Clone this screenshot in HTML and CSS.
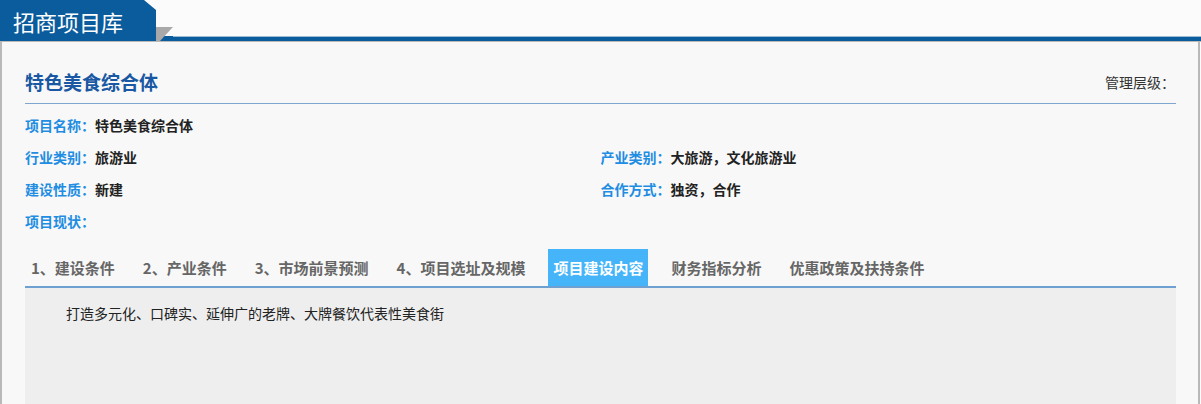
FILE: index.html
```html
<!DOCTYPE html>
<html lang="zh-CN">
<head>
<meta charset="utf-8">
<title>招商项目库</title>
<link rel="stylesheet" href="styles.css">
</head>
<body>
<div class="header">
  <div class="header-tab">招商项目库</div>
  <div class="header-rest">
    <svg class="header-fold" width="17" height="14" viewBox="0 0 17 14">
      <rect x="0" y="9" width="17" height="5" fill="#0b5c9d"/>
      <polygon points="0,0 17,0 4,14 0,14" fill="#a9a9a9"/>
    </svg>
    <div class="header-line"></div>
  </div>
</div>
<div class="panel">
  <div class="title-row">
    <h1 class="title">特色美食综合体</h1>
    <div class="level">管理层级：</div>
  </div>
  <div class="info">
    <div class="item"><span class="label">项目名称：</span><span class="value">特色美食综合体</span></div>
    <div class="item"></div>
    <div class="item"><span class="label">行业类别：</span><span class="value">旅游业</span></div>
    <div class="item"><span class="label">产业类别：</span><span class="value">大旅游，文化旅游业</span></div>
    <div class="item"><span class="label">建设性质：</span><span class="value">新建</span></div>
    <div class="item"><span class="label">合作方式：</span><span class="value">独资，合作</span></div>
    <div class="item"><span class="label">项目现状：</span><span class="value"></span></div>
    <div class="item"></div>
  </div>
  <div class="tabs">
    <div class="tab">1、建设条件</div>
    <div class="tab">2、产业条件</div>
    <div class="tab">3、市场前景预测</div>
    <div class="tab">4、项目选址及规模</div>
    <div class="tab active">项目建设内容</div>
    <div class="tab">财务指标分析</div>
    <div class="tab">优惠政策及扶持条件</div>
  </div>
  <div class="content">打造多元化、口碑实、延伸广的老牌、大牌餐饮代表性美食街</div>
</div>
</body>
</html>
```
FILE: styles.css
```css
html, body {
  margin: 0;
  padding: 0;
  background: #fbfbfb;
  font-family: "Noto Sans CJK SC", "Noto Sans", sans-serif;
  overflow: hidden;
}
.header {
  display: flex;
  height: 41px;
  border-bottom: 1px solid #b9b9b9;
}
.header-tab {
  width: 156px;
  height: 41px;
  box-sizing: border-box;
  background: #0b5c9d;
  color: #fff;
  font-size: 22px;
  line-height: 42px;
  padding-left: 13px;
  clip-path: polygon(0 0, 144px 0, 156px 10px, 156px 100%, 0 100%);
}
.header-rest {
  flex: 1;
  display: flex;
  align-items: flex-end;
}
.header-fold {
  display: block;
}
.header-line {
  flex: 1;
  height: 5px;
  background: #0b5c9d;
  border-top: 1px solid #9dbbd6;
  box-sizing: border-box;
}
.panel {
  background: #f8f8f8;
  border-left: 2px solid #b9b9b9;
  border-right: 2px solid #b9b9b9;
  margin-right: 1px;
  padding: 0 22px 0 23px;
  min-height: 400px;
}
.title-row {
  display: flex;
  justify-content: space-between;
  align-items: center;
  padding-top: 28px;
  padding-bottom: 9px;
  border-bottom: 1px solid #7ea6cf;
}
.title {
  margin: 0;
  font-size: 19px;
  line-height: 24px;
  font-weight: bold;
  color: #1a58a3;
}
.level {
  font-size: 14px;
  color: #333;
  line-height: 24px;
  margin-right: 1px;
}
.info {
  display: grid;
  grid-template-columns: 1fr 1fr;
  margin-top: 5px;
}
.item {
  height: 32px;
  line-height: 32px;
  font-size: 14px;
  font-weight: bold;
}
.label {
  color: #1e8de2;
}
.value {
  color: #222;
}
.tabs {
  display: flex;
  gap: 18px;
  margin-top: 12px;
  padding-left: 1px;
  border-bottom: 2px solid #6fa0d2;
}
.tab {
  height: 37px;
  line-height: 37px;
  padding: 0 5px;
  font-size: 15px;
  font-weight: bold;
  color: #666;
}
.tab.active {
  background: #45b4f9;
  color: #fff;
}
.content {
  background: #eeeeee;
  min-height: 200px;
  padding: 15px 0 0 41px;
  font-size: 14px;
  line-height: 20px;
  color: #222;
}
```
